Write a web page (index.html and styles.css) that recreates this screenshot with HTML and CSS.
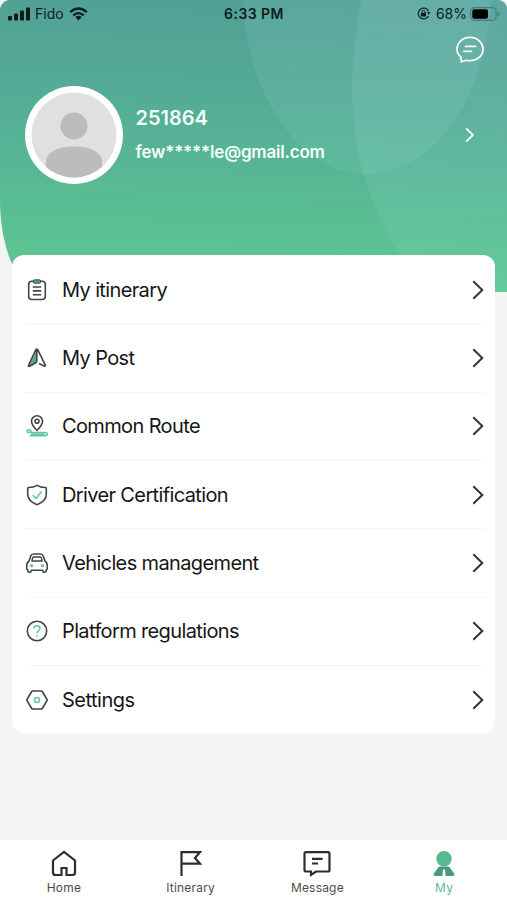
FILE: index.html
```
<!DOCTYPE html>
<html lang="en">
	<head>
		<meta charset="utf-8">
		<title>My</title>
		<link rel="stylesheet" href="styles.css">
	</head>
	<body>
		<div class="screen">
			<div class="header">
				<svg class="header-bg" width="507" height="292" viewBox="0 0 507 292">
					<defs>
						<linearGradient id="green" x1="0.53" y1="0" x2="0.47" y2="1">
							<stop offset="0" stop-color="#519f95"/>
							<stop offset="0.4" stop-color="#55ae96"/>
							<stop offset="1" stop-color="#5dc991"/>
						</linearGradient>
						<linearGradient id="glow" x1="0" y1="0" x2="0" y2="1">
							<stop offset="0" stop-color="#bcdcf0" stop-opacity="0.12"/>
							<stop offset="1" stop-color="#a0e6dc" stop-opacity="0.1"/>
						</linearGradient>
					</defs>
					<path fill="url(#green)" d="M8 0H499Q505 1 507 7V292H32C12 276 0 240 0 200V8Q2 2 8 0Z"/>
					<ellipse cx="367" cy="-10" rx="124" ry="184" fill="url(#glow)"/>
					<path fill="url(#glow)" d="M362 0C350 52 350 103 357 145C363 187 386 237 422 292H507V7Q505 1 499 0Z"/>
				</svg>

				<div class="status">
					<div class="status-left">
						<svg width="22" height="14" viewBox="0 0 22 14">
							<rect x="0" y="9" width="4" height="4.500" rx="1"/>
							<rect x="6" y="6.500" width="4" height="7" rx="1"/>
							<rect x="12" y="3.500" width="4" height="10" rx="1"/>
							<rect x="18" y="0.500" width="4" height="13" rx="1"/>
						</svg>
						<span class="carrier">Fido</span>
						<svg width="19" height="14" viewBox="0 0 19 14">
							<path fill="none" stroke="#0d1d1c" stroke-width="2.300" d="M1.200 5.200Q9.500-2.200 17.800 5.200M4.200 8.400Q9.500 3.800 14.800 8.400"/>
							<path d="M6.300 10.100Q9.500 7.500 12.700 10.100L9.500 13.500Z"/>
						</svg>
					</div>
					<span class="clock">6:33 PM</span>
					<div class="status-right">
						<svg width="13" height="13" viewBox="0 0 13 13">
							<path fill="none" stroke="#102c29" stroke-width="1.300" d="M11.500 4A5.400 5.400 0 1 0 11.500 9"/>
							<path d="M10 5H13L12 8Z"/>
							<rect x="4" y="5.800" width="5" height="3.700" rx="0.600"/>
							<path fill="none" stroke="#102c29" d="M5 6V4.900A1.500 1.500 0 0 1 8 4.900V6"/>
						</svg>
						<span class="percent">68%</span>
						<svg width="30" height="14" viewBox="0 0 30 14">
							<rect x="0.600" y="0.600" width="25.500" height="12.800" rx="4" fill="none" stroke="#3d7e77" stroke-width="1.100"/>
							<rect x="2.300" y="2.300" width="15.700" height="9.400" rx="2" fill="#000"/>
							<path fill="#3d7e77" d="M27.600 4.800Q29.700 5.500 29.700 7Q29.700 8.500 27.600 9.200Z"/>
						</svg>
					</div>
				</div>

				<div class="tools">
					<svg width="28" height="28" viewBox="0 0 28 28" fill="none" stroke="#fff" stroke-width="1.700" stroke-linecap="round" stroke-linejoin="round">
						<path d="M5 21.200C2.500 19 1 16.500 1 13.200C1 6.600 6.600 1.300 14 1.300S27 6.600 27 13.200S21.400 24.700 14 24.700Q12 24.700 10.500 24.200L5.300 25.800Z"/>
						<path d="M9.500 10.400H19.500M8 15.300H15.500"/>
					</svg>
				</div>

				<div class="profile">
					<svg class="avatar" width="98" height="98" viewBox="0 0 98 98">
						<defs>
							<clipPath id="face"><circle cx="49" cy="49" r="42.500"/></clipPath>
						</defs>
						<circle cx="49" cy="49" r="49" fill="#fff"/>
						<circle cx="49" cy="49" r="42.500" fill="#e0e0e0"/>
						<g clip-path="url(#face)" fill="#bcbcbc">
							<circle cx="49" cy="40" r="13.500"/>
							<path d="M21 76C21 66 33 60.500 49 60.500S77 66 77 76V98H21Z"/>
						</g>
					</svg>
					<div class="who">
						<div class="name">251864</div>
						<div class="email">few*****le@gmail.com</div>
					</div>
					<svg width="10" height="16" viewBox="0 0 10 16">
						<path fill="none" stroke="#fff" stroke-width="1.800" d="M1.200 1.500L8 8L1.200 14.500"/>
					</svg>
				</div>
			</div>

			<div class="card">
				<div class="row">
					<svg class="icon" viewBox="0 0 22 22">
						<rect class="dark" x="2.700" y="2.200" width="16.600" height="18.300" rx="3"/>
						<rect x="7.500" y="0.800" width="7" height="3.400" rx="0.800" fill="#4c9d86" stroke="#37584f"/>
						<path class="dark" d="M6.800 8H15.200M6.800 11.900H15.200M6.800 15.800H15.200"/>
					</svg>
					<span class="label">My itinerary</span>
					<svg class="arrow" viewBox="0 0 12 20"><path d="M1.300 1.200L10.300 10L1.300 18.800"/></svg>
				</div>
				<div class="row">
					<svg class="icon" viewBox="0 0 22 22">
						<path fill="#50ad94" d="M10.800 2.500V14.800L3 19Z"/>
						<path class="dark" d="M10.800 14.800L8.500 16.500L3.500 19.200Q2.200 19.700 2.500 18.400L9.900 2.700Q10.800 1.300 11.700 2.700L19.300 18.200Q19.800 19.500 18.500 19.200L13 16.500M10.800 2.500V14.800"/>
					</svg>
					<span class="label">My Post</span>
					<svg class="arrow" viewBox="0 0 12 20"><path d="M1.300 1.200L10.300 10L1.300 18.800"/></svg>
				</div>
				<div class="row">
					<svg class="icon" viewBox="0 0 22 22">
						<path class="dark" d="M11 15.500C7 11.500 5.500 9 5.500 6.300A5.500 5.500 0 0 1 16.500 6.300C16.500 9 15 11.500 11 15.500Z"/>
						<circle class="dark" cx="11" cy="6.300" r="2"/>
						<path class="mint" d="M4.500 14.700H2.500A1.400 1.400 0 0 0 2.500 17.500H19.700A1.500 1.500 0 0 1 19.700 20.700H3.500"/>
						<path class="mint" d="M3 16H6M5 19.100H19"/>
					</svg>
					<span class="label">Common Route</span>
					<svg class="arrow" viewBox="0 0 12 20"><path d="M1.300 1.200L10.300 10L1.300 18.800"/></svg>
				</div>
				<div class="row">
					<svg class="icon" viewBox="0 0 22 22">
						<path class="dark" d="M11 1.300C8.500 3 5 3.500 2.500 3.500Q1.700 3.600 1.700 4.500V10C1.700 15 5.500 18.500 11 20.800C16.500 18.500 20.300 15 20.300 10V4.500Q20.300 3.600 19.500 3.500C17 3.500 13.500 3 11 1.300Z"/>
						<path class="mint" d="M6.700 11.200L10 14.500L15.500 7.500"/>
					</svg>
					<span class="label">Driver Certification</span>
					<svg class="arrow" viewBox="0 0 12 20"><path d="M1.300 1.200L10.300 10L1.300 18.800"/></svg>
				</div>
				<div class="row">
					<svg class="icon" viewBox="0 0 22 22">
						<path class="dark" d="M3 9L4.800 4Q5.500 2 7.500 2H14.500Q16.500 2 17.200 4L19 9Q21.300 10.800 21.300 13.500V16.500Q21.300 17.700 20.200 17.700V19.200Q20 20.300 18.500 20.300Q17 20.300 16.700 18.300H5.300Q5 20.300 3.500 20.300Q2 20.300 1.800 19.200V17.700Q0.700 17.700 0.700 16.500V13.500Q0.700 10.800 3 9Z"/>
						<path class="dark" d="M7.500 5H14.500Q15.500 5 16 9H6Q6.500 5 7.500 5Z"/>
						<circle cx="5.500" cy="13.700" r="1.600" fill="#5fc7a0"/>
						<circle cx="16.500" cy="13.700" r="1.600" fill="#5fc7a0"/>
					</svg>
					<span class="label">Vehicles management</span>
					<svg class="arrow" viewBox="0 0 12 20"><path d="M1.300 1.200L10.300 10L1.300 18.800"/></svg>
				</div>
				<div class="row">
					<svg class="icon" viewBox="0 0 22 22">
						<circle class="dark" cx="11" cy="11" r="9.700"/>
						<path class="mint" d="M8 8.500Q8.200 5.800 11 5.800Q13.900 5.800 13.900 8.300Q13.900 9.800 12.300 10.900Q11 11.800 11 13.300M11 15.300V16.700"/>
					</svg>
					<span class="label">Platform regulations</span>
					<svg class="arrow" viewBox="0 0 12 20"><path d="M1.300 1.200L10.300 10L1.300 18.800"/></svg>
				</div>
				<div class="row">
					<svg class="icon" viewBox="0 0 22 22">
						<path class="dark" d="M6.500 2H15.500Q16 2 16.300 2.500L21 10.500Q21.200 11 21 11.500L16.300 19.500Q16 20 15.500 20H6.500Q6 20 5.700 19.500L1 11.500Q0.800 11 1 10.500L5.700 2.500Q6 2 6.500 2Z"/>
						<circle class="mint" cx="11" cy="11" r="2.500"/>
					</svg>
					<span class="label settings">Settings</span>
					<svg class="arrow" viewBox="0 0 12 20"><path d="M1.300 1.200L10.300 10L1.300 18.800"/></svg>
				</div>
			</div>

			<div class="tabs">
				<div class="tab">
					<svg width="28" height="28" viewBox="0 0 28 28">
						<path d="M3 10.500L14 2L25 10.500V22.500Q25 25 22.500 25H16.500V18H11.500V25H5.500Q3 25 3 22.500Z"/>
					</svg>
					<span>Home</span>
				</div>
				<div class="tab">
					<svg width="28" height="28" viewBox="0 0 28 28">
						<path d="M4.500 26V2.200H23L18 8L23 13.700H4.500"/>
					</svg>
					<span>Itinerary</span>
				</div>
				<div class="tab">
					<svg width="28" height="28" viewBox="0 0 28 28">
						<path d="M3 2.200H25Q26.500 2.200 26.500 3.700V20Q26.500 21.500 25 21.500H13L8 25V21.500H3Q1.500 21.500 1.500 20V3.700Q1.500 2.200 3 2.200ZM9 8.800H19.500M9 13.500H15"/>
					</svg>
					<span>Message</span>
				</div>
				<div class="tab active">
					<svg width="28" height="28" viewBox="0 0 28 28">
						<path fill="#499a83" d="M9 16.500H19L24.500 24Q25 26 23 26H5Q3 26 3.500 24Z"/>
						<path fill="#fff" d="M13 19.500H15L15.500 26H12.500Z"/>
						<circle cx="14" cy="8.800" r="7.700" fill="#55b991"/>
					</svg>
					<span>My</span>
				</div>
			</div>
		</div>
	</body>
</html>
```
FILE: styles.css
```
body {
	margin: 0;
	background-color: #fff;
	font-family: Inter, "Liberation Sans", sans-serif;
}

.screen {
	position: relative;
	display: flex;
	flex-direction: column;
	width: 507px;
	height: 900px;
	overflow: hidden;
	background-color: #f4f4f4;
}

.header {
	height: 255px;
}

.header-bg {
	position: absolute;
	top: 0;
	left: 0;
}

.status {
	position: relative;
	display: grid;
	grid-template-columns: 1fr auto 1fr;
	align-items: center;
	height: 27px;
	padding: 0 7px 0 8px;
	font-size: 14px;
	color: #0d1d1c;
	fill: #0d1d1c;
}

.status-left, .status-right {
	display: flex;
	align-items: center;
}

.status-left {
	gap: 5px;
}

.status-right {
	justify-content: flex-end;
	gap: 4px;
}

.carrier {
	width: 29px;
}

.percent {
	margin: 0 -1px 0 2px;
}

.clock {
	font-weight: 600;
	letter-spacing: 0.45px;
}

.tools {
	position: relative;
	display: flex;
	justify-content: flex-end;
	height: 49px;
	padding: 9px 23px 0 0;
	box-sizing: border-box;
}

.profile {
	position: relative;
	display: flex;
	align-items: center;
	padding: 10px 32px 0 25px;
}

.who {
	flex: 1;
	margin-left: 12.5px;
	padding-bottom: 1px;
	font-weight: 600;
	color: #f3fffa;
}

.name {
	font-size: 20px;
	line-height: 34px;
}

.email {
	font-size: 17px;
	line-height: 34px;
	letter-spacing: -0.2px;
}

.card {
	position: relative;
	margin: 0 12px;
	padding-top: 1px;
	height: 478px;
	border-radius: 12px;
	background-color: #fff;
	box-sizing: border-box;
}

.row {
	display: flex;
	align-items: center;
	height: 68.35px;
	margin: 0 11px 0 14px;
	border-bottom: 1px solid #f4f4f4;
	box-sizing: border-box;
}

.row:last-child {
	border-bottom: none;
}

.icon {
	width: 22px;
	height: 22px;
}

.dark, .mint {
	fill: none;
	stroke: #444;
	stroke-width: 1.6;
	stroke-linejoin: round;
}

.mint {
	stroke: #65c9a4;
}

.label {
	flex: 1;
	margin-left: 14px;
	font-size: 20px;
	letter-spacing: -0.63px;
	color: #161616;
}

.settings {
	letter-spacing: -0.5px;
}

.arrow {
	width: 12px;
	height: 20px;
	fill: none;
	stroke: #333;
	stroke-width: 2;
}

.tabs {
	display: flex;
	height: 60px;
	margin-top: auto;
	background-color: #fff;
}

.tab {
	display: flex;
	flex: 1;
	flex-direction: column;
	align-items: center;
	padding: 10px 0 0 1px;
	font-size: 12px;
	line-height: 20px;
	letter-spacing: 0.2px;
	color: #4d4d4d;
}

.tab svg {
	fill: none;
	stroke: #2d2d2d;
	stroke-width: 2.2;
}

.active {
	color: #62b89b;
}

.active svg {
	stroke: none;
}
```
